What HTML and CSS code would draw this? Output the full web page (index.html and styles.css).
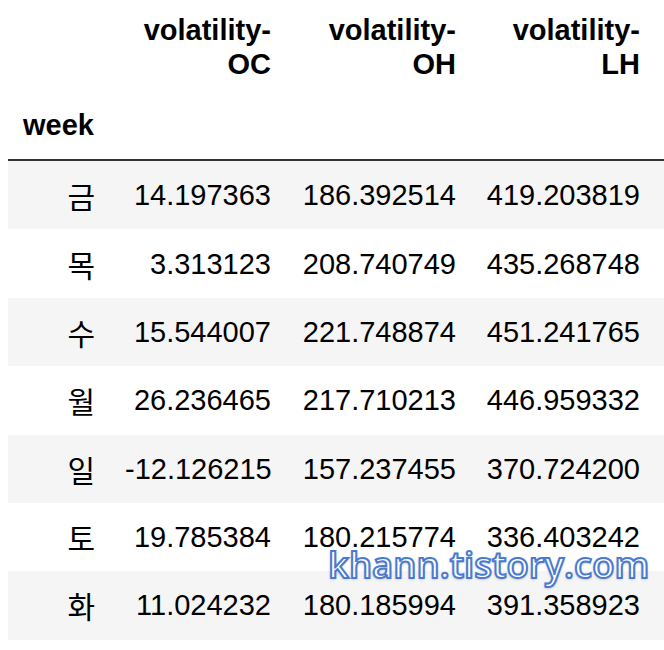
FILE: index.html
```html
<!DOCTYPE html>
<html lang="ko">
<head>
<meta charset="utf-8">
<title>week volatility</title>
<link rel="stylesheet" href="styles.css">
</head>
<body>
<div class="page">
  <table class="df">
    <colgroup>
      <col class="c-idx">
      <col class="c-oc">
      <col class="c-oh">
      <col class="c-lh">
    </colgroup>
    <thead>
      <tr class="hdr-cols">
        <th></th>
        <th>volatility-OC</th>
        <th>volatility-OH</th>
        <th class="last">volatility-LH</th>
      </tr>
      <tr class="hdr-index">
        <th class="idx-name">week</th>
        <th></th>
        <th></th>
        <th class="last"></th>
      </tr>
    </thead>
    <tbody>
      <tr><th>금</th><td>14.197363</td><td>186.392514</td><td class="last">419.203819</td></tr>
      <tr><th>목</th><td>3.313123</td><td>208.740749</td><td class="last">435.268748</td></tr>
      <tr><th>수</th><td>15.544007</td><td>221.748874</td><td class="last">451.241765</td></tr>
      <tr><th>월</th><td>26.236465</td><td>217.710213</td><td class="last">446.959332</td></tr>
      <tr><th>일</th><td>-12.126215</td><td>157.237455</td><td class="last">370.724200</td></tr>
      <tr><th>토</th><td>19.785384</td><td>180.215774</td><td class="last">336.403242</td></tr>
      <tr><th>화</th><td>11.024232</td><td>180.185994</td><td class="last">391.358923</td></tr>
    </tbody>
  </table>
  <div class="watermark">khann.tistory.com</div>
</div>
</body>
</html>
```
FILE: styles.css
```css
html, body {
  background: #ffffff;
}
body {
  margin: 0 0 0 8px;
  overflow: hidden;
}
.page {
  position: relative;
}
.df {
  width: 656px;
  table-layout: fixed;
  border-collapse: separate;
  border-spacing: 0;
  font-family: "Liberation Sans", Arial, "Noto Sans CJK KR", sans-serif;
  font-size: 29px;
  line-height: 34px;
  color: #000;
}
.c-idx { width: 102px; }
.c-oc { width: 176px; }
.c-oh { width: 185px; }
.c-lh { width: 193px; }

.df th, .df td {
  padding: 0 15px;
  text-align: right;
  vertical-align: middle;
}
.df .last {
  padding-right: 24px;
}
.df th {
  font-weight: bold;
}
.hdr-cols th {
  padding-top: 13px;
  padding-bottom: 12px;
}
.hdr-index th {
  padding-top: 15px;
  padding-bottom: 17px;
  border-bottom: 2px solid #333333;
}
.hdr-index .idx-name {
  text-align: left;
}
.df tbody th,
.df tbody td {
  padding-top: 17.2px;
  padding-bottom: 17.2px;
  font-weight: normal;
}
.df tbody th {
  font-family: "Noto Sans CJK KR", sans-serif;
  font-size: 30px;
}
.df tbody tr:nth-child(odd) {
  background: #f5f5f5;
}
.watermark {
  position: absolute;
  left: 320px;
  top: 545px;
  font-family: "Open Sans", "Noto Sans", sans-serif;
  font-weight: 600;
  font-size: 36.5px;
  line-height: 38px;
  color: #ffffff;
  -webkit-text-stroke: 2px #4a7bd0;
  text-shadow: 0 1px 3px rgba(0, 0, 0, 0.35);
  white-space: nowrap;
}
```
